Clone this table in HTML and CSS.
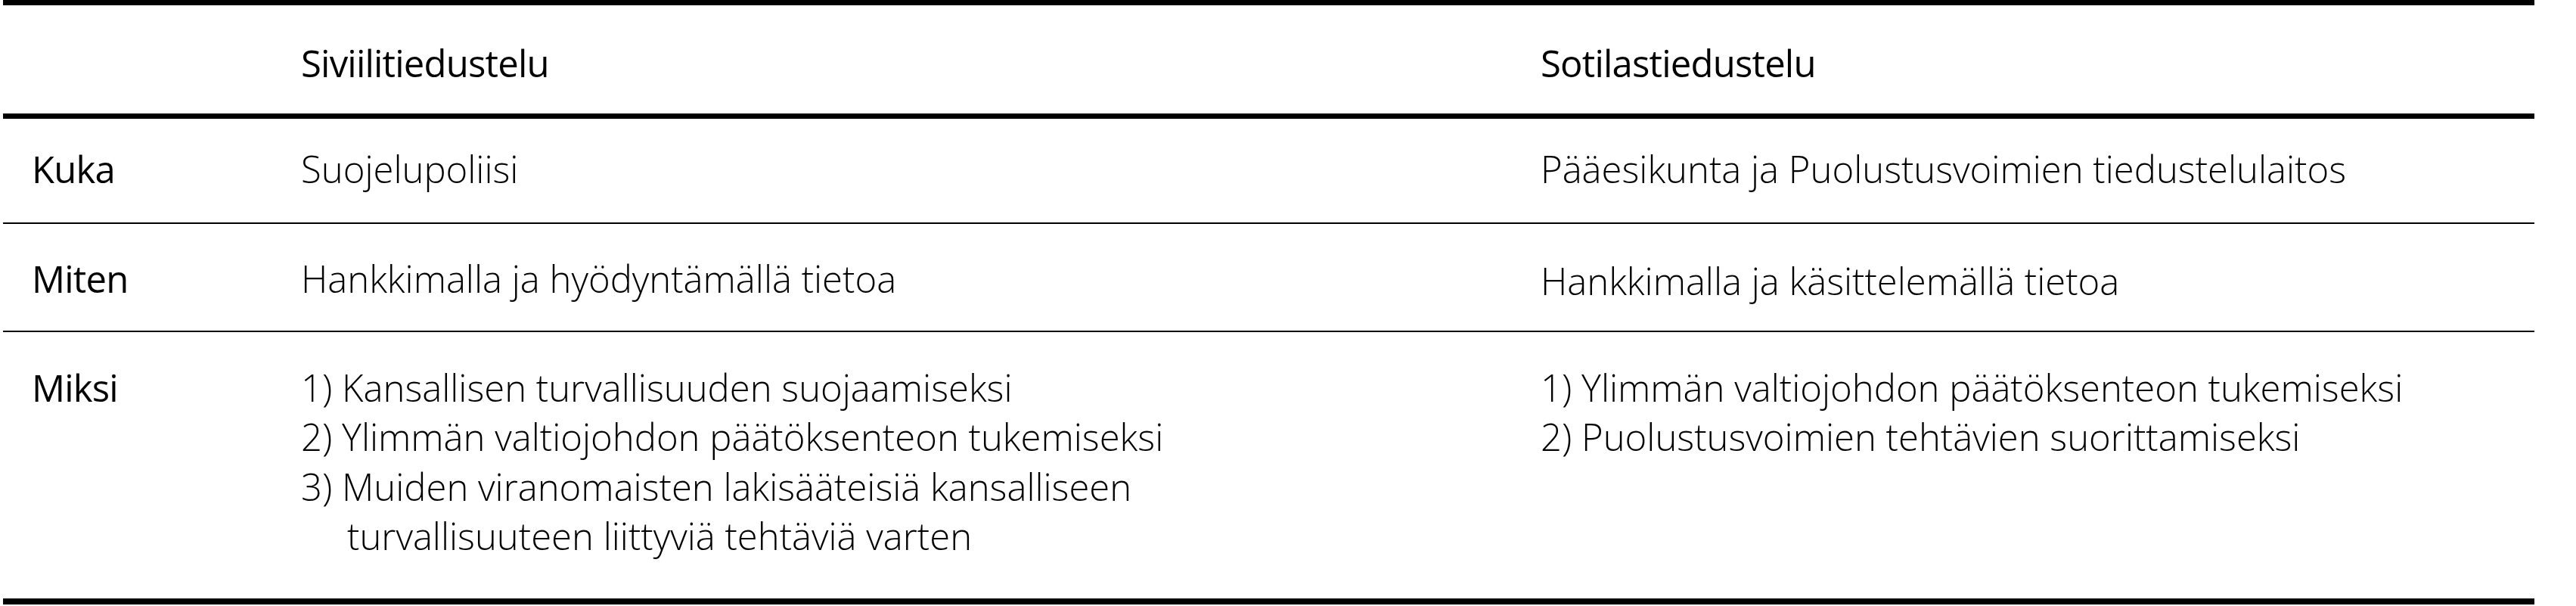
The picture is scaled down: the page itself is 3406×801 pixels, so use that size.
FILE: index.html
```html
<!DOCTYPE html>
<html lang="fi">
<head>
<meta charset="utf-8">
<title>Siviili- ja sotilastiedustelu</title>
<link rel="stylesheet" href="styles.css">
</head>
<body>
<table class="compare">
  <colgroup>
    <col class="col-label">
    <col class="col-civil">
    <col class="col-military">
  </colgroup>
  <thead>
    <tr class="row-head">
      <th></th>
      <th>Siviilitiedustelu</th>
      <th>Sotilastiedustelu</th>
    </tr>
  </thead>
  <tbody>
    <tr class="row-who">
      <th>Kuka</th>
      <td>Suojelupoliisi</td>
      <td>Pääesikunta ja Puolustusvoimien tiedustelulaitos</td>
    </tr>
    <tr class="row-how">
      <th>Miten</th>
      <td>Hankkimalla ja hyödyntämällä tietoa</td>
      <td class="nudge">Hankkimalla ja käsittelemällä tietoa</td>
    </tr>
    <tr class="row-why">
      <th>Miksi</th>
      <td>
        <ol class="reasons">
          <li><span class="num">1)</span> Kansallisen turvallisuuden suojaamiseksi</li>
          <li><span class="num">2)</span> Ylimmän valtiojohdon päätöksenteon tukemiseksi</li>
          <li><span class="num">3)</span> Muiden viranomaisten lakisääteisiä kansalliseen<br>turvallisuuteen liittyviä tehtäviä varten</li>
        </ol>
      </td>
      <td>
        <ol class="reasons">
          <li><span class="num">1)</span> Ylimmän valtiojohdon päätöksenteon tukemiseksi</li>
          <li><span class="num">2)</span> Puolustusvoimien tehtävien suorittamiseksi</li>
        </ol>
      </td>
    </tr>
  </tbody>
</table>
</body>
</html>
```

FILE: styles.css
```css
html, body {
  margin: 0;
  padding: 0;
  background: #ffffff;
}

body {
  padding-left: 4px;
  color: #000000;
  font-family: "Open Sans", "Noto Sans", "Liberation Sans", sans-serif;
}

.compare {
  width: 3347px;
  table-layout: fixed;
  border-collapse: separate;
  border-spacing: 0;
  font-size: 49px;
  line-height: 65.5px;
}

.col-label { width: 356px; }
.col-civil { width: 1639px; }

.compare th,
.compare td {
  padding: 0 20px 0 38px;
  text-align: left;
  vertical-align: top;
}

.compare th {
  font-weight: 400;
  letter-spacing: -0.8px;
}

.compare td {
  font-weight: 300;
  letter-spacing: 0;
}

.row-head th {
  border-top: 7px solid #000;
  border-bottom: 7px solid #000;
  padding-top: 44px;
  padding-bottom: 33px;
}

.row-who th,
.row-who td {
  padding-top: 34px;
  padding-bottom: 38px;
  border-bottom: 2px solid #000;
}

.row-how th,
.row-how td {
  padding-top: 40px;
  padding-bottom: 35px;
  border-bottom: 2px solid #000;
}

.row-how td.nudge {
  padding-top: 43px;
  padding-bottom: 32px;
}

.row-why th,
.row-why td {
  padding-top: 41px;
  padding-bottom: 49px;
  border-bottom: 8px solid #000;
}

.reasons {
  list-style: none;
  margin: 0;
  padding: 0;
}

.reasons li {
  padding-left: 61px;
  text-indent: -61px;
}
```
